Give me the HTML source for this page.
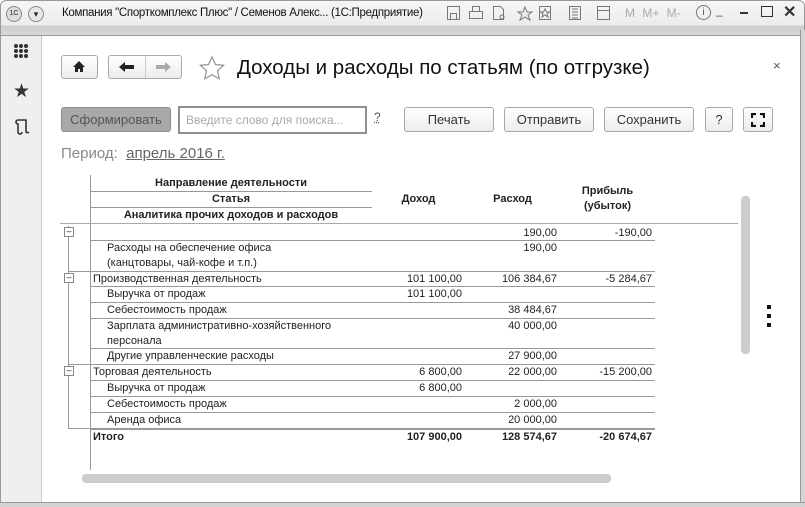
<!DOCTYPE html>
<html><head><meta charset="utf-8"><style>
*{margin:0;padding:0;box-sizing:border-box}
body{width:805px;height:507px;overflow:hidden;background:#fff;font-family:"Liberation Sans",Arial,sans-serif;position:relative;color:#222}
.a{position:absolute}
.tb{left:0;top:0;width:805px;height:36px;background:linear-gradient(#f6f6f6,#ececec 70%,#cdcdcd 75%,#d8d8d8);border:1px solid #999;border-radius:6px 6px 0 0}
.side{left:0;top:36px;width:42px;height:471px;background:#efefef;border-right:1px solid #c8c8c8;border-left:1px solid #999}
.main{left:42px;top:36px;width:758px;height:467px;background:#fff}
.rb{left:800px;top:30px;width:5px;height:477px;background:#d4d4d4;border-left:1px solid #999}
.bb{left:0;top:502px;width:805px;height:5px;background:#d4d4d4;border-top:1px solid #999}
.btn{border:1px solid #a8a8a8;border-radius:3px;background:linear-gradient(#fff,#ececec);font-size:13px;color:#333;text-align:center;line-height:23px;height:25px}
.t{font-size:11px;white-space:nowrap;line-height:15px}
.r{text-align:right}
.ln{height:1px;background:#999}
.b{font-weight:bold}
</style></head><body>
<div class="a tb"></div>
<div class="a" style="left:6px;top:6px;width:16px;height:16px;border-radius:50%;border:1px solid #888;background:#ddd;font-size:7px;text-align:center;line-height:14px">1С</div>
<div class="a" style="left:28px;top:6px;width:16px;height:16px;border-radius:50%;border:1px solid #888;background:#e8e8e8;font-size:9px;text-align:center;line-height:14px">▾</div>
<div class="a" style="left:62px;top:7px;font-size:11.5px;color:#111;white-space:nowrap;letter-spacing:-0.3px">Компания "Спорткомплекс Плюс" / Семенов Алекс... (1С:Предприятие)</div>
<svg class="a" style="left:445px;top:4px" width="170" height="18" fill="none" stroke="#777" stroke-width="1">
<rect x="2.5" y="2.5" width="12" height="13"/><rect x="5.5" y="9.5" width="6" height="6"/>
<rect x="24.5" y="7.5" width="13" height="7"/><rect x="27.5" y="2.5" width="7" height="5"/>
<path d="M48.5 2.5h7l3 3v10h-10z"/><circle cx="57" cy="13" r="2"/>
<path d="M80 3l2 5h5l-4 3 2 5-5-3-5 3 2-5-4-3h5z"/>
<rect x="94.5" y="2.5" width="11" height="13"/><path d="M100 5l1.5 3h3l-2.5 2 1 3-3-2-3 2 1-3-2.5-2h3z"/>
<rect x="124.5" y="2.5" width="11" height="13"/><path d="M127 5h6M127 8h6M127 11h6M127 14h6"/>
<rect x="152.5" y="2.5" width="12" height="13"/><path d="M152.5 6.5h12"/>
</svg>
<div class="a" style="left:625px;top:6px;font-size:12px;color:#aaa;white-space:nowrap;word-spacing:4px">M M+ M-</div>
<div class="a" style="left:696px;top:5px;width:15px;height:15px;border-radius:50%;border:1px solid #777;font-size:10px;text-align:center;line-height:13px;color:#555">i</div>
<div class="a" style="left:716px;top:3px;font-size:12px;color:#555">_</div>
<div class="a" style="left:740px;top:12px;width:8px;height:2px;background:#333"></div>
<div class="a" style="left:761px;top:6px;width:12px;height:11px;border:1.5px solid #333"></div>
<div class="a" style="left:783px;top:2px;font-size:16px;font-weight:bold;color:#333">✕</div>
<div class="a side"></div>
<svg class="a" style="left:13px;top:43px" width="16" height="16" fill="#333"><circle cx="3" cy="3" r="2"/><circle cx="8" cy="3" r="2"/><circle cx="13" cy="3" r="2"/><circle cx="3" cy="8" r="2"/><circle cx="8" cy="8" r="2"/><circle cx="13" cy="8" r="2"/><circle cx="3" cy="13" r="2"/><circle cx="8" cy="13" r="2"/><circle cx="13" cy="13" r="2"/></svg>
<div class="a" style="left:13px;top:80px;font-size:19px;color:#333">★</div>
<svg class="a" style="left:15px;top:118px" width="16" height="18" fill="none" stroke="#333" stroke-width="1.6"><path d="M3 2h8v12a2 2 0 0 0 3 0M3 2a2 2 0 0 0 0 4v8a2 2 0 0 0 4 0"/></svg>
<div class="a main"></div>
<div class="a rb"></div><div class="a bb"></div>
<div class="a btn" style="left:61px;top:55px;width:37px;height:24px"></div>
<svg class="a" style="left:72px;top:60px" width="14" height="14" fill="#222"><path d="M7 1l6 6h-2v5H8V9H6v3H3V7H1z"/></svg>
<div class="a btn" style="left:108px;top:55px;width:74px;height:24px"></div>
<div class="a" style="left:145px;top:56px;width:1px;height:22px;background:#ccc"></div>
<svg class="a" style="left:118px;top:60px" width="18" height="14" fill="#222"><path d="M1 7l6-5v3h9v4H7v3z"/></svg>
<svg class="a" style="left:154px;top:60px" width="18" height="14" fill="#aaa"><path d="M17 7l-6-5v3H2v4h9v3z"/></svg>
<svg class="a" style="left:198px;top:55px" width="28" height="26" fill="none" stroke="#999" stroke-width="1.3"><path d="M14 2l3.5 7.5 8 .8-6 5.5 1.8 8L14 19.8 6.7 23.8l1.8-8-6-5.5 8-.8z"/></svg>
<div class="a" style="left:237px;top:56px;font-size:20.5px;color:#111;white-space:nowrap">Доходы и расходы по статьям (по отгрузке)</div>
<div class="a" style="left:773px;top:58px;font-size:13px;color:#555">×</div>
<div class="a btn" style="left:61px;top:107px;width:110px;background:#a8a8a8;border-color:#8c8c8c;color:#555">Сформировать</div>
<div class="a" style="left:178px;top:106px;width:189px;height:28px;border:2px solid #8e8e8e;font-size:12px;color:#aaa;line-height:24px;padding-left:6px;white-space:nowrap">Введите слово для поиска...</div>
<div class="a" style="left:374px;top:110px;font-size:12px;color:#555;text-decoration:underline dotted">?</div>
<div class="a btn" style="left:404px;top:107px;width:90px">Печать</div>
<div class="a btn" style="left:504px;top:107px;width:90px">Отправить</div>
<div class="a btn" style="left:604px;top:107px;width:90px">Сохранить</div>
<div class="a btn" style="left:705px;top:107px;width:28px">?</div>
<div class="a btn" style="left:743px;top:107px;width:30px"></div>
<svg class="a" style="left:751px;top:113px" width="14" height="14" fill="none" stroke="#111" stroke-width="2.2"><path d="M1 5V1h4M9 1h4v4M13 9v4H9M5 13H1V9"/></svg>
<div class="a" style="left:61px;top:145px;font-size:15px;color:#888;white-space:nowrap">Период:&nbsp; <span style="color:#666;text-decoration:underline">апрель 2016 г.</span></div>

<div class="a" style="left:90px;top:175px;width:1px;height:295px;background:#999"></div>
<div class="a t b" style="left:90px;top:176px;width:282px;text-align:center">Направление деятельности</div>
<div class="a ln" style="left:90px;top:191px;width:282px"></div>
<div class="a t b" style="left:90px;top:192px;width:282px;text-align:center">Статья</div>
<div class="a ln" style="left:90px;top:207px;width:282px"></div>
<div class="a t b" style="left:90px;top:208px;width:282px;text-align:center">Аналитика прочих доходов и расходов</div>
<div class="a t b" style="left:372px;top:192px;width:93px;text-align:center">Доход</div>
<div class="a t b" style="left:465px;top:192px;width:95px;text-align:center">Расход</div>
<div class="a t b" style="left:560px;top:184px;width:95px;text-align:center">Прибыль<br>(убыток)</div>
<div class="a ln" style="left:60px;top:223px;width:678px;background:#aaa"></div>

<div class="a" style="left:68px;top:226px;width:1px;height:203px;background:#999"></div>
<div class="a" style="left:64px;top:227px;width:10px;height:10px;border:1px solid #888;background:#fff;font-size:9px;line-height:7px;text-align:center">–</div>
<div class="a" style="left:64px;top:273px;width:10px;height:10px;border:1px solid #888;background:#fff;font-size:9px;line-height:7px;text-align:center">–</div>
<div class="a" style="left:64px;top:366px;width:10px;height:10px;border:1px solid #888;background:#fff;font-size:9px;line-height:7px;text-align:center">–</div>
<div class="a" style="left:68px;top:271px;width:22px;height:1px;background:#999"></div>
<div class="a" style="left:68px;top:364px;width:22px;height:1px;background:#999"></div>
<div class="a" style="left:68px;top:428px;width:22px;height:1px;background:#999"></div>

<div class="a t r" style="left:465px;top:226px;width:92px">190,00</div><div class="a t r" style="left:560px;top:226px;width:92px">-190,00</div>
<div class="a ln" style="left:90px;top:240px;width:565px"></div>
<div class="a t" style="left:107px;top:241px">Расходы на обеспечение офиса<br>(канцтовары, чай-кофе и т.п.)</div>
<div class="a t r" style="left:465px;top:241px;width:92px">190,00</div>
<div class="a ln" style="left:90px;top:271px;width:565px"></div>
<div class="a t" style="left:93px;top:272px">Производственная деятельность</div>
<div class="a t r" style="left:372px;top:272px;width:90px">101 100,00</div><div class="a t r" style="left:465px;top:272px;width:92px">106 384,67</div><div class="a t r" style="left:560px;top:272px;width:92px">-5 284,67</div>
<div class="a ln" style="left:90px;top:286px;width:565px"></div>
<div class="a t" style="left:107px;top:287px">Выручка от продаж</div>
<div class="a t r" style="left:372px;top:287px;width:90px">101 100,00</div>
<div class="a ln" style="left:90px;top:302px;width:565px"></div>
<div class="a t" style="left:107px;top:303px">Себестоимость продаж</div>
<div class="a t r" style="left:465px;top:303px;width:92px">38 484,67</div>
<div class="a ln" style="left:90px;top:318px;width:565px"></div>
<div class="a t" style="left:107px;top:319px">Зарплата административно-хозяйственного<br>персонала</div>
<div class="a t r" style="left:465px;top:319px;width:92px">40 000,00</div>
<div class="a ln" style="left:90px;top:348px;width:565px"></div>
<div class="a t" style="left:107px;top:349px">Другие управленческие расходы</div>
<div class="a t r" style="left:465px;top:349px;width:92px">27 900,00</div>
<div class="a ln" style="left:90px;top:364px;width:565px"></div>
<div class="a t" style="left:93px;top:365px">Торговая деятельность</div>
<div class="a t r" style="left:372px;top:365px;width:90px">6 800,00</div><div class="a t r" style="left:465px;top:365px;width:92px">22 000,00</div><div class="a t r" style="left:560px;top:365px;width:92px">-15 200,00</div>
<div class="a ln" style="left:90px;top:380px;width:565px"></div>
<div class="a t" style="left:107px;top:381px">Выручка от продаж</div>
<div class="a t r" style="left:372px;top:381px;width:90px">6 800,00</div>
<div class="a ln" style="left:90px;top:396px;width:565px"></div>
<div class="a t" style="left:107px;top:397px">Себестоимость продаж</div>
<div class="a t r" style="left:465px;top:397px;width:92px">2 000,00</div>
<div class="a ln" style="left:90px;top:412px;width:565px"></div>
<div class="a t" style="left:107px;top:413px">Аренда офиса</div>
<div class="a t r" style="left:465px;top:413px;width:92px">20 000,00</div>
<div class="a" style="left:90px;top:428px;width:565px;height:2px;background:#999"></div>
<div class="a t b" style="left:93px;top:430px">Итого</div>
<div class="a t r b" style="left:372px;top:430px;width:90px">107 900,00</div><div class="a t r b" style="left:465px;top:430px;width:92px">128 574,67</div><div class="a t r b" style="left:560px;top:430px;width:92px">-20 674,67</div>

<div class="a" style="left:741px;top:196px;width:9px;height:158px;background:#ccc;border-radius:4px"></div>
<div class="a" style="left:82px;top:474px;width:529px;height:9px;background:#ccc;border-radius:4px"></div>
<div class="a" style="left:767px;top:305px;width:4px;height:4px;background:#111;box-shadow:0 9px 0 #111,0 18px 0 #111"></div>
</body></html>
